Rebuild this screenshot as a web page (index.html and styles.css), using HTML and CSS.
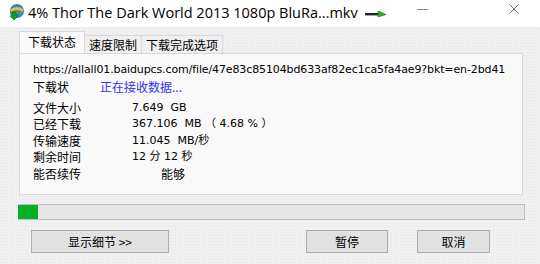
FILE: index.html
```html
<!DOCTYPE html>
<html lang="zh">
<head>
  <meta charset="UTF-8" />
  <title>4% Thor The Dark World 2013 1080p BluRa...mkv</title>
  <link rel="stylesheet" href="styles.css">
</head>
<body>
  <div class="window">
    <div class="titlebar">
      <svg class="app-icon" width="18" height="18" viewBox="0 0 18 18">
        <circle cx="10" cy="8" r="7" fill="#2f7fd6"/>
        <path d="M4 6 Q10 2 16 6 L16 9 Q10 5 4 9 Z" fill="#f0c020"/>
        <path d="M3 10 Q9 6 15 10 L14 12 Q9 9 4 13 Z" fill="#3cb040"/>
        <path d="M5 9 L9 9 L9 13 L11 13 L7 17 L3 13 L5 13 Z" fill="#1a9a2a" stroke="#0b5a14" stroke-width="0.6"/>
      </svg>
      <span class="title">4% Thor The Dark World 2013 1080p BluRa...mkv</span>
      <svg class="cursor" width="22" height="6" viewBox="0 0 22 6">
        <rect x="0" y="2" width="14" height="2.4" fill="#222"/>
        <path d="M13 0 L21 3.5 L13 6 Z" fill="#18c018" stroke="#0a6a0a" stroke-width="0.6"/>
      </svg>
      <div class="controls">
        <svg class="min" width="11" height="10" viewBox="0 0 11 10">
          <path d="M0 5.5 H11" stroke="#888" stroke-width="1"/>
        </svg>
        <svg class="close" width="10" height="10" viewBox="0 0 10 10">
          <path d="M0.5 0.5 L9.5 9.5 M9.5 0.5 L0.5 9.5" stroke="#777" stroke-width="1"/>
        </svg>
      </div>
    </div>

    <div class="content">
      <div class="tabs">
        <div class="tab active">下载状态</div>
        <div class="tab">速度限制</div>
        <div class="tab">下载完成选项</div>
      </div>
      <div class="panel">
        <div class="url">https://allall01.baidupcs.com/file/47e83c85104bd633af82ec1ca5fa4ae9?bkt=en-2bd41</div>
        <div class="row status">
          <span class="label">下载状</span>
          <span class="busy">正在接收数据...</span>
        </div>
        <div class="info">
          <div class="row"><span class="label">文件大小</span><span class="val">7.649&nbsp; GB</span></div>
          <div class="row"><span class="label">已经下载</span><span class="val">367.106&nbsp; MB （ 4.68 % ）</span></div>
          <div class="row"><span class="label">传输速度</span><span class="val">11.045&nbsp; MB/秒</span></div>
          <div class="row"><span class="label">剩余时间</span><span class="val">12 分 12 秒</span></div>
          <div class="row"><span class="label">能否续传</span><span class="val resume">能够</span></div>
        </div>
      </div>

      <div class="progress">
        <div class="fill" style="width: 4%"></div>
      </div>

      <div class="buttons">
        <button class="btn details">显示细节 &gt;&gt;</button>
        <div class="right-btns">
          <button class="btn pause">暂停</button>
          <button class="btn cancel">取消</button>
        </div>
      </div>
    </div>
  </div>
</body>
</html>
```

FILE: styles.css
```css
body {
  margin: 0;
  width: 540px;
  height: 264px;
  overflow: hidden;
  background-color: #f0f0f0;
  font-family: "DejaVu Sans", "Noto Sans CJK SC", sans-serif;
  font-size: 11px;
  color: #000;
}
.window {
  height: 264px;
  background-color: #f0f0f0;
  background-image: radial-gradient(#e4e4ea 0.6px, transparent 0.7px);
  background-size: 3px 3px;
}
.titlebar {
  height: 27px;
  background-color: #fff;
  display: flex;
  align-items: center;
}
.app-icon {
  flex: none;
  margin-left: 7px;
  margin-top: -3px;
}
.title {
  margin-left: 3px;
  margin-top: -3px;
  font-family: "Open Sans", sans-serif;
  font-size: 14.5px;
  color: #000;
  white-space: nowrap;
}
.cursor {
  flex: none;
  margin-left: 7px;
  margin-top: 1px;
}
.controls {
  display: flex;
  align-items: center;
  gap: 81px;
  margin-left: auto;
  margin-right: 21px;
  margin-top: -9px;
}
.content {
  padding: 5px 15px 0 18px;
}
.tabs {
  display: flex;
  align-items: flex-end;
  height: 21px;
  margin-left: 1px;
}
.tab {
  font-family: "Noto Sans CJK SC", sans-serif;
  font-size: 12px;
  height: 17px;
  line-height: 17px;
  padding: 0 4px;
  border: 1px solid #d9d9d9;
  border-bottom: none;
  background-color: #f0f0f0;
  margin-left: -1px;
}
.tab.active {
  height: 21px;
  line-height: 20px;
  padding: 0 8px;
  margin-left: 0;
  background-color: #f9f9f9;
}
.panel {
  width: 504px;
  height: 142px;
  margin-left: 1px;
  border: 1px solid #d9d9d9;
  background-color: #f9f9f9;
  padding: 7px 0 0 13px;
  box-sizing: border-box;
}
.url {
  height: 17px;
  line-height: 17px;
  white-space: nowrap;
  letter-spacing: -0.12px;
}
.row {
  display: flex;
  height: 16.5px;
  line-height: 16.5px;
  white-space: nowrap;
}
.label {
  font-family: "Noto Sans CJK SC", sans-serif;
  font-size: 12px;
  width: 99px;
}
.status {
  margin-top: 1px;
}
.status .label {
  width: 67px;
}
.busy {
  font-family: "Noto Sans CJK SC", sans-serif;
  font-size: 12px;
  color: #3333ee;
}
.info {
  margin-top: 4px;
}
.resume {
  padding-left: 29px;
  font-family: "Noto Sans CJK SC", sans-serif;
  font-size: 12px;
}
.progress {
  margin-top: 9px;
  width: 507px;
  height: 16px;
  box-sizing: border-box;
  border: 1px solid #bcbcbc;
  border-left: none;
  background-color: #e6e6e6;
}
.fill {
  height: 100%;
  background-color: #06b025;
}
.buttons {
  display: flex;
  margin-top: 10px;
  padding-left: 13px;
}
.right-btns {
  display: flex;
  gap: 29px;
  margin-left: 137px;
}
.btn {
  font-family: "Noto Sans CJK SC", sans-serif;
  font-size: 12px;
  height: 23px;
  padding: 0;
  border: 1px solid #adadad;
  background-color: #e1e1e1;
  color: #000;
}
.details {
  width: 138px;
}
.pause {
  width: 82px;
}
.cancel {
  width: 73px;
}
```
